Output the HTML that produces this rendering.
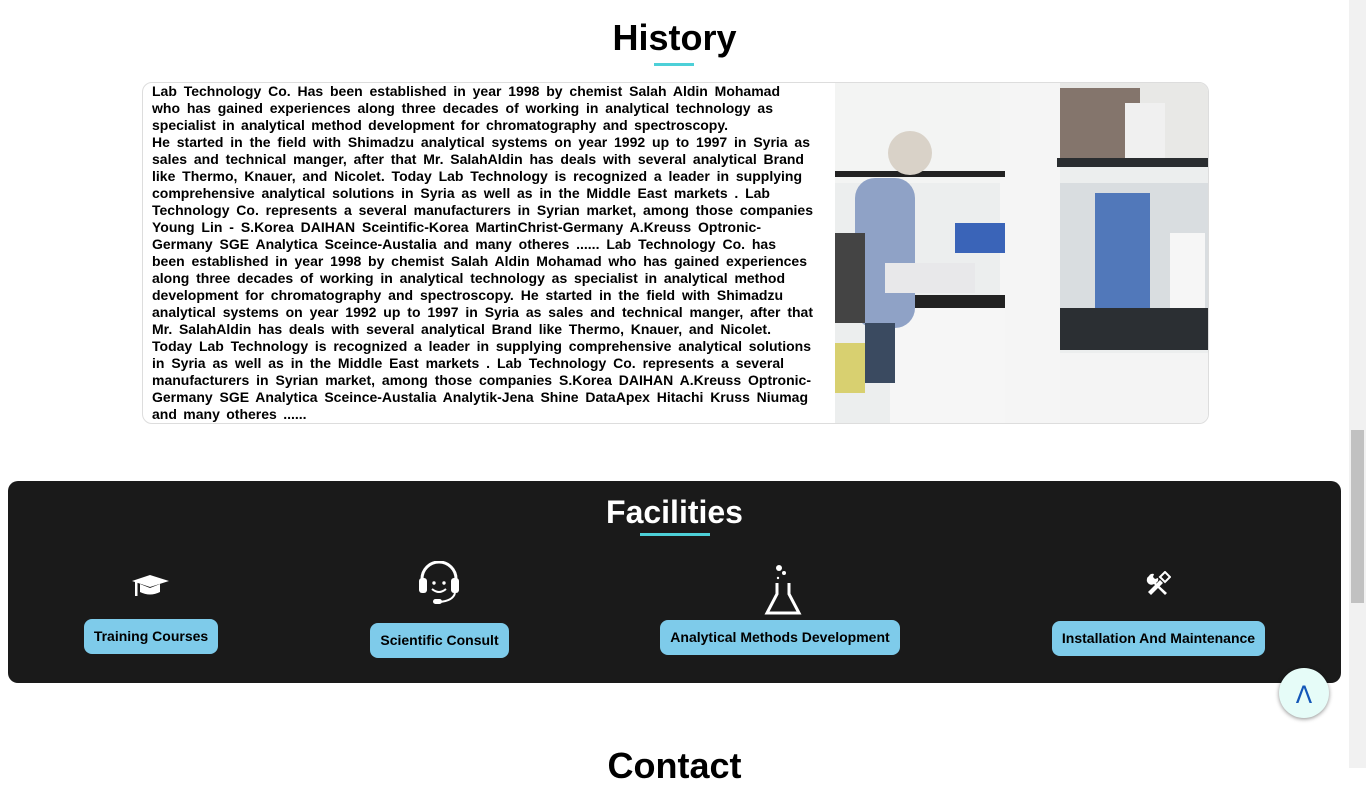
<!DOCTYPE html>
<html><head><meta charset="utf-8"><style>
*{margin:0;padding:0;box-sizing:border-box}
html,body{width:1366px;height:768px;overflow:hidden;background:#fff;font-family:"Liberation Sans",Arial,sans-serif}
.h{position:absolute;left:0;width:1349px;text-align:center;font-weight:bold;font-size:36px;color:#000}
.ul{position:absolute;height:3px;background:#4dd0d8}
.card{position:absolute;left:142px;top:82px;width:1067px;height:342px;border:1px solid #ddd;border-radius:10px;overflow:hidden}
.txt{position:absolute;left:9px;top:0px;font-weight:bold;font-size:14px;line-height:17px;color:#000;word-spacing:2.5px}
.txt span{display:block;text-align:justify;text-align-last:justify;white-space:nowrap;overflow:visible}
.txt span.l{text-align-last:left}
.fac{position:absolute;left:8px;top:481px;width:1333px;height:202px;background:#1a1a1a;border-radius:10px}
.btn{position:absolute;background:#7ecbea;border-radius:8px;font-weight:bold;font-size:14px;color:#000;text-align:center;height:35px;line-height:35px}
.sb{position:absolute;left:1349px;top:0;width:17px;height:768px;background:#f1f1f1}
.th{position:absolute;left:1351px;top:430px;width:13px;height:173px;background:#c1c1c1}
.top{position:absolute;left:1279px;top:668px;width:50px;height:50px;border-radius:50%;background:#e6fcf8;box-shadow:0 1px 4px rgba(0,0,0,.45);color:#1457b8;font-size:24px;text-align:center;line-height:54px;font-family:"DejaVu Sans",sans-serif}
</style></head><body>
<div class="h" style="top:17px">History</div>
<div class="ul" style="left:654px;top:63px;width:40px"></div>
<div class="card">
<div class="txt">
<span style="width:628px">Lab Technology Co. Has been established in year 1998 by chemist Salah Aldin Mohamad</span>
<span style="width:621px">who has gained experiences along three decades of working in analytical technology as</span>
<span class="l" style="width:580px">specialist in analytical method development for chromatography and spectroscopy.</span>
<span style="width:658px">He started in the field with Shimadzu analytical systems on year 1992 up to 1997 in Syria as</span>
<span style="width:652px">sales and technical manger, after that Mr. SalahAldin has deals with several analytical Brand</span>
<span style="width:650px">like Thermo, Knauer, and Nicolet. Today Lab Technology is recognized a leader in supplying</span>
<span style="width:618px">comprehensive analytical solutions in Syria as well as in the Middle East markets . Lab</span>
<span style="width:661px">Technology Co. represents a several manufacturers in Syrian market, among those companies</span>
<span style="width:609px">Young Lin - S.Korea DAIHAN Sceintific-Korea MartinChrist-Germany A.Kreuss Optronic-</span>
<span style="width:624px">Germany SGE Analytica Sceince-Austalia and many otheres ...... Lab Technology Co. has</span>
<span style="width:655px">been established in year 1998 by chemist Salah Aldin Mohamad who has gained experiences</span>
<span style="width:633px">along three decades of working in analytical technology as specialist in analytical method</span>
<span style="width:631px">development for chromatography and spectroscopy. He started in the field with Shimadzu</span>
<span style="width:661px">analytical systems on year 1992 up to 1997 in Syria as sales and technical manger, after that</span>
<span style="width:619px">Mr. SalahAldin has deals with several analytical Brand like Thermo, Knauer, and Nicolet.</span>
<span style="width:659px">Today Lab Technology is recognized a leader in supplying comprehensive analytical solutions</span>
<span style="width:632px">in Syria as well as in the Middle East markets . Lab Technology Co. represents a several</span>
<span style="width:659px">manufacturers in Syrian market, among those companies S.Korea DAIHAN A.Kreuss Optronic-</span>
<span style="width:656px">Germany SGE Analytica Sceince-Austalia Analytik-Jena Shine DataApex Hitachi Kruss Niumag</span>
<span class="l" style="width:160px">and many otheres ......</span>
</div>
<svg style="position:absolute;left:692px;top:0" width="374" height="342" viewBox="0 0 374 342">
<rect width="374" height="342" fill="#eceeee"/>
<rect x="0" y="0" width="170" height="100" fill="#f3f4f3"/>
<rect x="165" y="0" width="60" height="342" fill="#f5f5f5"/>
<rect x="225" y="0" width="149" height="80" fill="#e8e8e6"/>
<rect x="222" y="75" width="152" height="9" fill="#2a2d30"/>
<rect x="225" y="5" width="80" height="70" fill="#5a4438" opacity=".7"/>
<rect x="290" y="20" width="40" height="55" fill="#f0f0f0"/>
<rect x="0" y="88" width="170" height="6" fill="#222"/>
<rect x="225" y="100" width="149" height="145" fill="#d9dde0"/>
<rect x="260" y="110" width="55" height="140" fill="#2e5fb0" opacity=".8"/>
<rect x="225" y="225" width="149" height="42" fill="#2b2f33"/>
<rect x="0" y="212" width="170" height="14" fill="#222"/>
<rect x="120" y="140" width="50" height="30" fill="#3a64b8"/>
<rect x="55" y="225" width="115" height="117" fill="#f6f6f6"/>
<rect x="225" y="270" width="149" height="72" fill="#f4f4f4"/>
<rect x="20" y="95" width="60" height="150" rx="20" fill="#8fa2c6"/>
<circle cx="75" cy="70" r="22" fill="#d9d2c8"/>
<rect x="50" y="180" width="90" height="30" fill="#e8e8ea"/>
<rect x="0" y="150" width="30" height="90" fill="#444"/>
<rect x="30" y="240" width="30" height="60" fill="#3a4a60"/>
<rect x="0" y="260" width="30" height="50" fill="#d8d070"/>
<rect x="335" y="150" width="35" height="75" fill="#f6f6f6"/>
</svg>
</div>
<div class="fac">
<div style="position:absolute;left:0;width:1333px;top:13px;text-align:center;color:#fff;font-weight:bold;font-size:32px">Facilities</div>
<div class="ul" style="left:632px;top:52px;width:70px"></div>
<svg style="position:absolute;left:123px;top:91px" width="40" height="28" viewBox="0 0 40 28"><path d="M1 9 L19 3 L38 9 L19 15 Z" fill="#fff"/><path d="M9 12 V20 Q19 25 29 20 V12 L19 16 Z" fill="#fff"/><rect x="4" y="10" width="2.5" height="14" fill="#fff"/></svg>
<svg style="position:absolute;left:409px;top:80px" width="44" height="46" viewBox="0 0 44 46"><path d="M5 22 V18 A17 17 0 0 1 39 18 V22" fill="none" stroke="#fff" stroke-width="3"/><rect x="2" y="17" width="8" height="15" rx="3" fill="#fff"/><rect x="34" y="17" width="8" height="15" rx="3" fill="#fff"/><circle cx="17" cy="22" r="1.7" fill="#fff"/><circle cx="27" cy="22" r="1.7" fill="#fff"/><path d="M15 28 Q22 34 29 28" fill="none" stroke="#fff" stroke-width="2"/><path d="M38 32 Q36 40 22 41" fill="none" stroke="#fff" stroke-width="2"/><rect x="16" y="38" width="9" height="5" rx="2.5" fill="#fff"/></svg>
<svg style="position:absolute;left:755px;top:83px" width="40" height="52" viewBox="0 0 40 52"><circle cx="16" cy="4" r="3" fill="#fff"/><circle cx="21" cy="9" r="2" fill="#fff"/><circle cx="15" cy="14" r="1.2" fill="#fff"/><path d="M14 19 V30 L4 49 H36 L26 30 V19" fill="none" stroke="#fff" stroke-width="3"/></svg>
<svg style="position:absolute;left:1137px;top:90px" width="26" height="26" viewBox="0 0 26 26"><path d="M3 21 L15 9 L18 12 L6 24 Z" fill="#fff"/><path d="M15 6 L20 1 L25 6 L20 11 Z" fill="none" stroke="#fff" stroke-width="2"/><path d="M4 5 A4 4 0 0 1 9 3 L8 6 L10 8 L13 7 A4 4 0 0 1 11 12 L22 22 L20 24 L9 13 A4 4 0 0 1 4 5 Z" fill="#fff"/></svg>
</div>
<div class="btn" style="left:84px;top:619px;width:134px">Training Courses</div>
<div class="btn" style="left:370px;top:623px;width:139px">Scientific Consult</div>
<div class="btn" style="left:660px;top:620px;width:240px">Analytical Methods Development</div>
<div class="btn" style="left:1052px;top:621px;width:213px">Installation And Maintenance</div>
<div class="h" style="top:745px">Contact</div>
<div class="top">&#923;</div>
<div class="sb"></div><div class="th"></div>
</body></html>
